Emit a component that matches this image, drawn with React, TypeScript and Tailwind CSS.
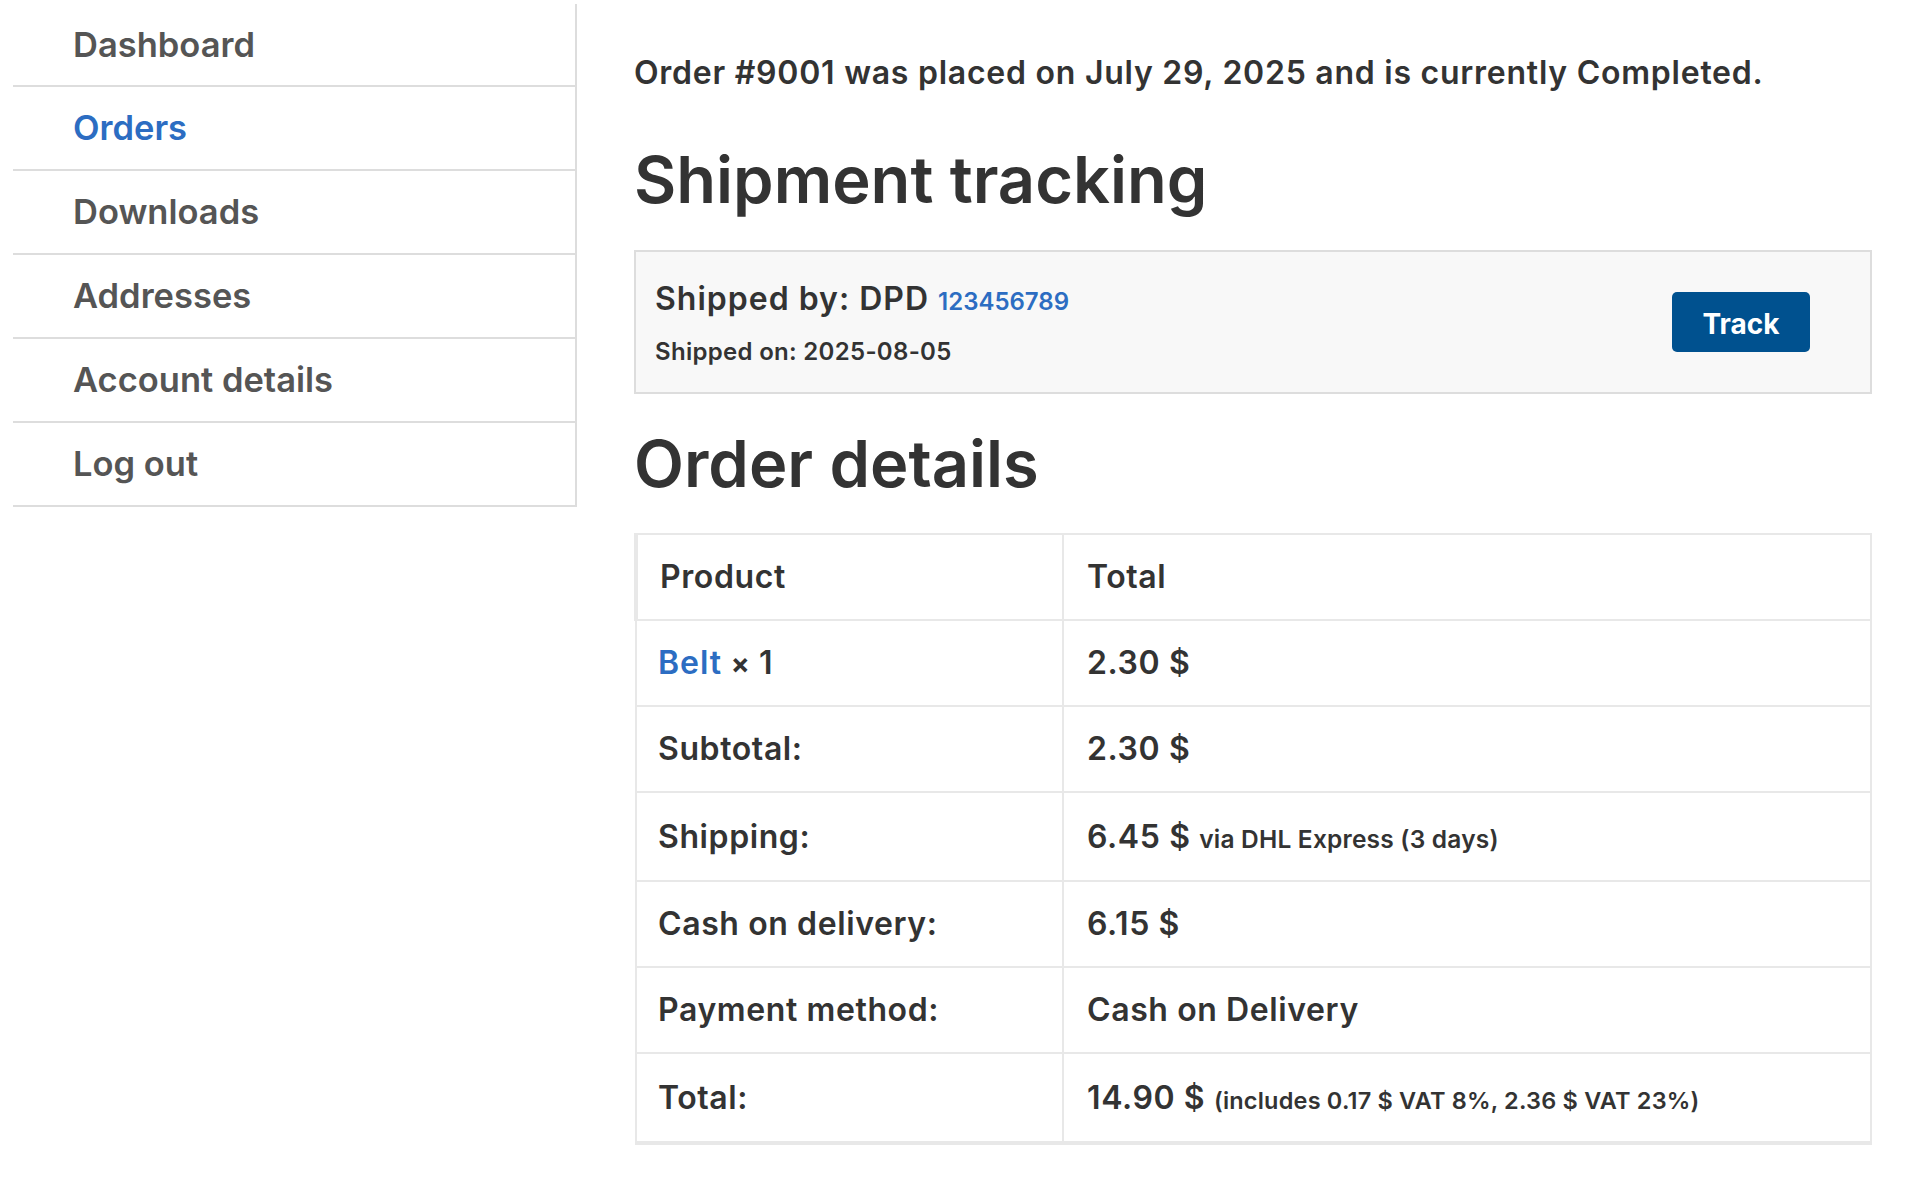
const navItems = [
  { label: 'Dashboard', active: false },
  { label: 'Orders', active: true },
  { label: 'Downloads', active: false },
  { label: 'Addresses', active: false },
  { label: 'Account details', active: false },
  { label: 'Log out', active: false },
];

function Sidebar() {
  return (
    <nav className="w-[564px] shrink-0 self-start border-r-2 border-[#dddddd] mt-[4px]">
      {navItems.map((item, i) => (
        <a
          key={item.label}
          href="#"
          className={`flex items-center pl-[60px] text-[34.5px] font-semibold ${
            i === 0 ? 'h-[83px]' : 'h-[84px]'
          } border-b-2 border-[#dddddd] ${item.active ? 'text-[#2c6dc2]' : 'text-[#555555]'}`}
        >
          {item.label}
        </a>
      ))}
    </nav>
  );
}

function ShipmentBox() {
  return (
    <div className="mt-[31px] flex h-[144px] items-center justify-between border-2 border-[#dddddd] bg-[#f8f8f8] pl-[19px] pr-[60px]">
      <div className="pt-[3px]">
        <div className="text-[32px] font-semibold leading-[1.2] tracking-[1px] text-[#333333]">
          Shipped by: DPD{' '}
          <a href="#" className="text-[24px] tracking-[0px] text-[#2c6dc2]">
            123456789
          </a>
        </div>
        <div className="mt-[19px] text-[24px] font-semibold leading-[1.2] tracking-[0.3px] text-[#333333]">
          Shipped on: 2025-08-05
        </div>
      </div>
      <button className="h-[60px] w-[138px] rounded-[5px] bg-[#00518f] pt-[4px] text-[28px] font-bold text-white">
        Track
      </button>
    </div>
  );
}

type Row = { label: React.ReactNode; value: React.ReactNode; height: string };

const rows: Row[] = [
  {
    label: (
      <>
        <a href="#" className="tracking-[1px] text-[#2c6dc2]">
          Belt
        </a>{' '}
        <span className="text-[28px] font-bold">×</span> 1
      </>
    ),
    value: '2.30 $',
    height: 'h-[86px]',
  },
  { label: 'Subtotal:', value: '2.30 $', height: 'h-[86px]' },
  {
    label: 'Shipping:',
    value: (
      <>
        6.45 $ <span className="text-[24.5px] tracking-[0.2px]">via DHL Express (3 days)</span>
      </>
    ),
    height: 'h-[89px]',
  },
  { label: 'Cash on delivery:', value: '6.15 $', height: 'h-[86px]' },
  { label: 'Payment method:', value: 'Cash on Delivery', height: 'h-[86px]' },
  {
    label: 'Total:',
    value: (
      <>
        14.90 $ <span className="text-[23.5px] tracking-[0.2px]">(includes 0.17 $ VAT 8%, 2.36 $ VAT 23%)</span>
      </>
    ),
    height: 'h-[90px]',
  },
];

function OrderTable() {
  return (
    <table className="mt-[30px] w-full border-collapse text-left text-[32px] font-semibold tracking-[0.6px] text-[#333333]">
      <thead>
        <tr className="h-[86px]">
          <th className="w-[427px] border-2 border-l-[4px] border-[#e8e8e8] pl-[22px] font-semibold">Product</th>
          <th className="border-2 border-[#e8e8e8] pl-[23px] font-semibold">Total</th>
        </tr>
      </thead>
      <tbody>
        {rows.map((r, i) => (
          <tr key={i} className={r.height}>
            <td className={`border-2 border-[#e8e8e8] pl-[21px] ${i === rows.length - 1 ? 'border-b-[4px]' : ''}`}>
              {r.label}
            </td>
            <td className={`border-2 border-[#e8e8e8] pl-[23px] ${i === rows.length - 1 ? 'border-b-[4px]' : ''}`}>
              {r.value}
            </td>
          </tr>
        ))}
      </tbody>
    </table>
  );
}

export default function App() {
  return (
    <div className="min-h-screen bg-white font-['Inter','Noto_Sans',sans-serif]">
      <div className="flex pl-[13px] pr-[52px]">
        <Sidebar />
        <main className="ml-[57px] flex-1 pb-[40px]">
          <p className="mt-[49px] text-[32px] font-semibold leading-[1.5] tracking-[0.75px] text-[#333333]">
            Order #9001 was placed on July 29, 2025 and is currently Completed.
          </p>
          <h2 className="mt-[44px] text-[65px] font-semibold leading-[1.2] text-[#333333]">Shipment tracking</h2>
          <ShipmentBox />
          <h2 className="mt-[31px] text-[65px] font-semibold leading-[1.2] text-[#333333]">Order details</h2>
          <OrderTable />
        </main>
      </div>
    </div>
  );
}
